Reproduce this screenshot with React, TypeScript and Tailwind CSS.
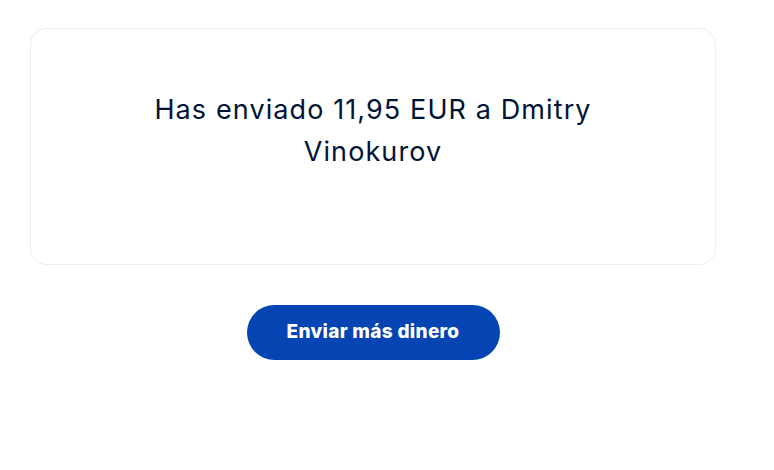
export default function App() {
  return (
    <div className="min-h-[470px] bg-white font-['Inter','Liberation_Sans',sans-serif]">
      <div className="ml-[30px] w-[686px] pt-[28px] flex flex-col items-center">
        {/* tarjeta de confirmación */}
        <div className="w-full h-[237px] rounded-2xl border border-[#eeeeee] px-[90px] pt-[60px]">
          <p className="text-center text-[27px] leading-[42px] text-[#001435] tracking-[1.1px]">
            Has enviado 11,95 EUR a Dmitry Vinokurov
          </p>
        </div>

        <button
          type="button"
          className="mt-[40px] h-[55px] w-[253px] rounded-full bg-[#0444b3] text-[19px] font-extrabold tracking-[0.3px] text-white"
        >
          Enviar más dinero
        </button>
      </div>
    </div>
  );
}
